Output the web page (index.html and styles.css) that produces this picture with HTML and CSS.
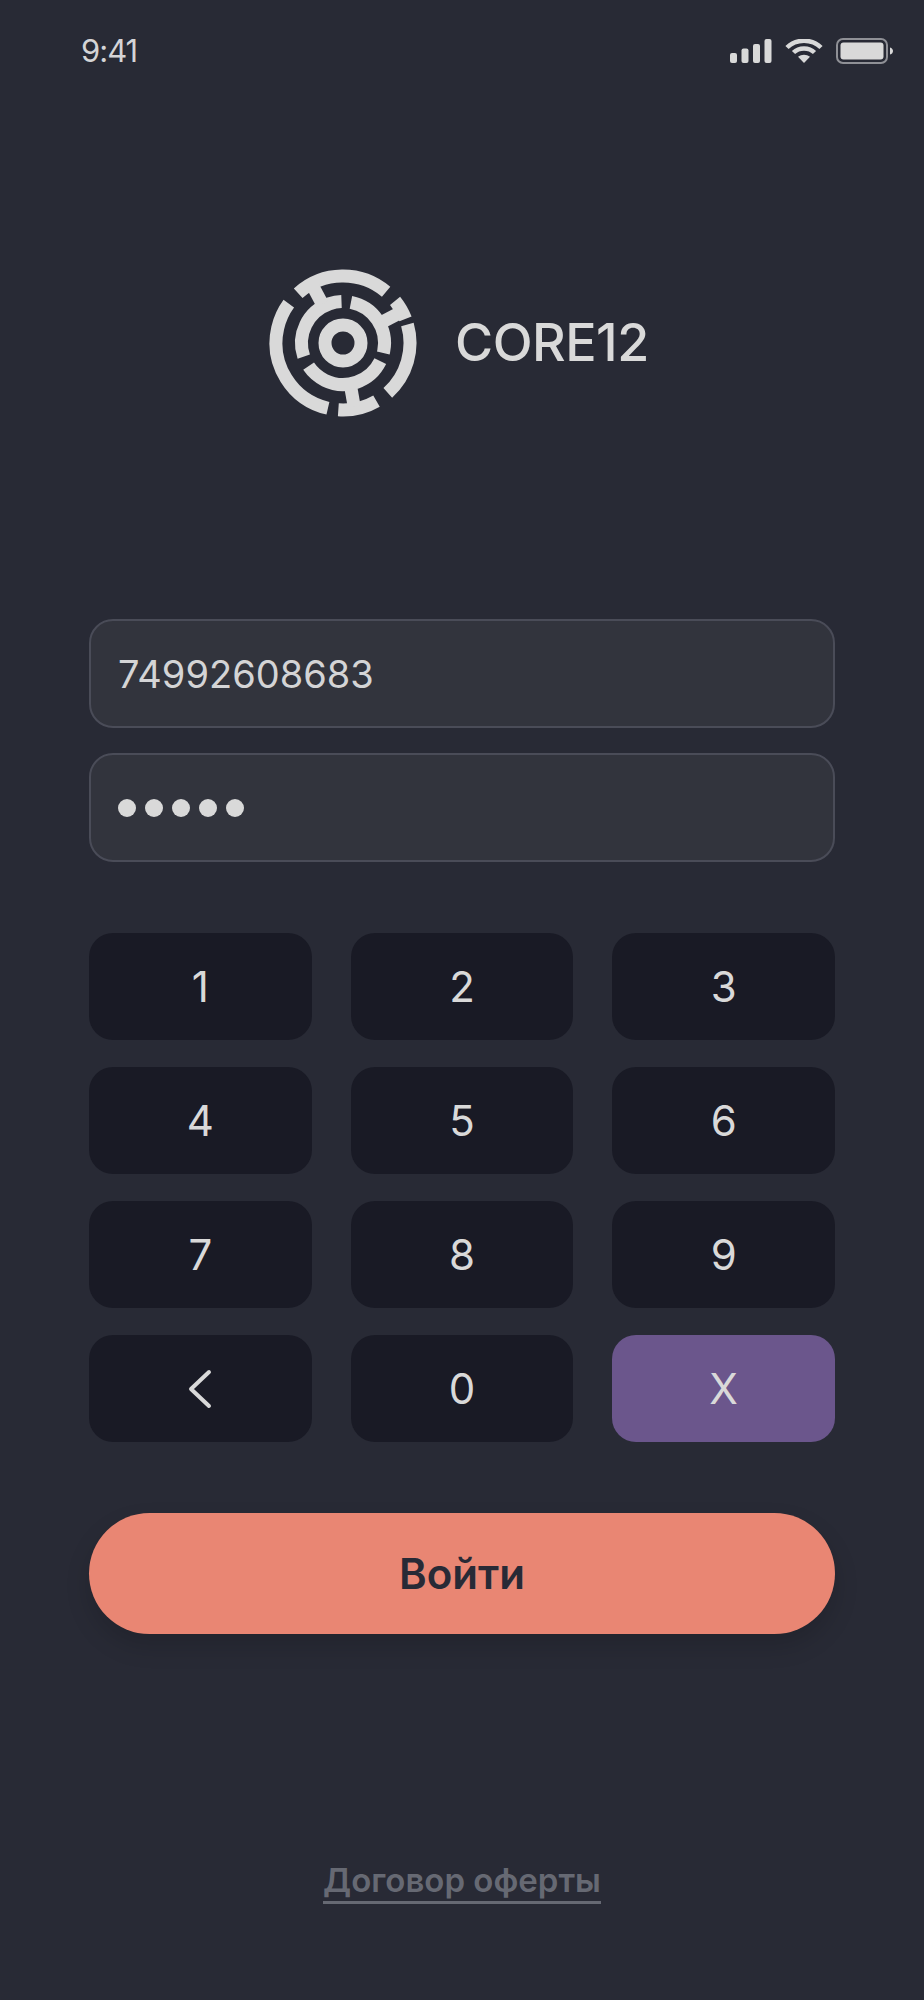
FILE: index.html
```html
<!DOCTYPE html>
<html lang="ru">
<head>
<meta charset="UTF-8">
<meta name="viewport" content="width=device-width, initial-scale=1.0">
<title>CORE12</title>
<link rel="stylesheet" href="styles.css">
</head>
<body>
<div class="page">
    <div class="status">
        <span class="time">9:41</span>
        <div class="status-icons">
            <svg class="signal" width="42" height="24" viewBox="0 0 42 24">
                <rect x="0" y="14" width="7" height="10" rx="2"/>
                <rect x="11.5" y="9.500" width="7" height="14.500" rx="2"/>
                <rect x="23" y="5" width="7" height="19" rx="2"/>
                <rect x="34.500" y="0" width="7" height="24" rx="2"/>
            </svg>
            <svg class="wifi" width="38" height="24" viewBox="0 0 38 24">
                <path d="M2 8.500C11 -0.500 27 -0.500 36 8.500" />
                <path d="M8.500 13.500C14 8 24 8 29.500 13.500" />
                <path class="wifi-dot" d="M19 24L13 17.800C16.500 15 21.500 15 25 17.800Z" />
            </svg>
            <svg class="battery" width="57" height="26" viewBox="0 0 57 26">
                <rect class="battery-line" x="1" y="1" width="50" height="24" rx="6"/>
                <rect x="4.500" y="4.500" width="43" height="17" rx="3"/>
                <path d="M54 9.500C56 10 57 11.500 57 13C57 14.500 56 16 54 16.500Z"/>
            </svg>
        </div>
    </div>

    <div class="logo">
        <svg class="logo-mark" width="150" height="150" viewBox="-75 -75 150 150">
            <g class="rings">
                <circle r="18"/>
                <!-- middle ring -->
                <circle r="41.500" pathLength="360" stroke-dasharray="107 360" transform="rotate(161)"/>
                <circle r="41.500" pathLength="360" stroke-dasharray="93 360" transform="rotate(-79)"/>
                <circle r="41.500" pathLength="360" stroke-dasharray="120 360" transform="rotate(26)"/>
                <!-- outer ring -->
                <circle r="67" pathLength="360" stroke-dasharray="82 360" transform="rotate(-132)"/>
                <circle r="67" pathLength="360" stroke-dasharray="18 360" transform="rotate(-39)"/>
                <circle r="67" pathLength="360" stroke-dasharray="64 360" transform="rotate(-16)"/>
                <circle r="67" pathLength="360" stroke-dasharray="34 360" transform="rotate(60)"/>
                <circle r="67" pathLength="360" stroke-dasharray="113 360" transform="rotate(103)"/>
                <!-- stems -->
                <line x1="44" x2="64" transform="rotate(-118)"/>
                <line x1="44" x2="64" transform="rotate(-28)"/>
                <line x1="44" x2="64" transform="rotate(80)"/>
            </g>
        </svg>
        <span class="logo-name">CORE12</span>
    </div>

    <div class="fields">
        <div class="field">74992608683</div>
        <div class="field field-dots">
            <i></i><i></i><i></i><i></i><i></i>
        </div>
    </div>

    <div class="keypad">
        <div class="key">1</div>
        <div class="key">2</div>
        <div class="key">3</div>
        <div class="key">4</div>
        <div class="key">5</div>
        <div class="key">6</div>
        <div class="key">7</div>
        <div class="key">8</div>
        <div class="key">9</div>
        <div class="key">
            <svg width="24" height="40" viewBox="0 0 24 40">
                <path class="chevron" d="M21 3L3 20L21 37"/>
            </svg>
        </div>
        <div class="key">0</div>
        <div class="key key-clear">X</div>
    </div>

    <div class="login">Войти</div>

    <div class="offer"><span>Договор оферты</span></div>
</div>
</body>
</html>
```

FILE: styles.css
```css
html, body {
    margin: 0;
    padding: 0;
    background: #282a35;
}
.page {
    width: 924px;
    height: 2000px;
    padding: 0 89px;
    box-sizing: border-box;
    font-family: Inter, "Noto Sans", sans-serif;
    color: #d9d9d9;
}

/* status bar */
.status {
    display: flex;
    justify-content: space-between;
    align-items: center;
    height: 26px;
    padding-top: 38px;
    margin: 0 -58px 0 -8px;
}
.time {
    font-size: 31px;
    line-height: 26px;
    letter-spacing: -1px;
    color: #d4d4d6;
}
.status-icons {
    display: flex;
    align-items: center;
    gap: 13px;
}
.status-icons svg {
    display: block;
    fill: #d9d9d9;
}
.wifi path {
    fill: none;
    stroke: #d9d9d9;
    stroke-width: 4.500px;
}
.wifi .wifi-dot {
    fill: #d9d9d9;
    stroke: none;
}
.battery-line {
    fill: none;
    stroke: #8f9096;
    stroke-width: 2px;
}

/* logo */
.logo {
    display: flex;
    align-items: center;
    gap: 37px;
    margin: 204px 0 0 179px;
}
.logo-mark {
    display: block;
    flex: none;
}
.rings circle, .rings line {
    fill: none;
    stroke: #d9d9d9;
    stroke-width: 13px;
}
.logo-name {
    font-size: 52px;
    font-weight: 500;
    letter-spacing: -0.5px;
    line-height: 60px;
}

/* inputs */
.fields {
    display: flex;
    flex-direction: column;
    gap: 25px;
    margin-top: 201px;
}
.field {
    display: flex;
    align-items: center;
    height: 109px;
    padding: 0 27px;
    box-sizing: border-box;
    background: #32343d;
    border: 2px solid #4a4c58;
    border-radius: 24px;
    font-size: 38px;
    color: #d4d4d6;
}
.field-dots {
    gap: 9px;
}
.field-dots i {
    width: 18px;
    height: 18px;
    border-radius: 50%;
    background: #d9d9d9;
}

/* keypad */
.keypad {
    display: grid;
    grid-template-columns: repeat(3, 1fr);
    grid-auto-rows: 107px;
    gap: 27px 39px;
    margin-top: 71px;
}
.key {
    display: flex;
    align-items: center;
    justify-content: center;
    background: #191a25;
    border-radius: 24px;
    font-size: 42px;
    color: #d9d9d9;
}
.key-clear {
    background: #6b568c;
}
.chevron {
    fill: none;
    stroke: #d9d9d9;
    stroke-width: 4px;
    stroke-linecap: round;
    stroke-linejoin: round;
}

/* login button */
.login {
    display: flex;
    align-items: center;
    justify-content: center;
    height: 121px;
    margin-top: 71px;
    background: #e98673;
    border-radius: 61px;
    box-shadow: 0 12px 24px rgba(0, 0, 0, 0.15);
    font-size: 42px;
    font-weight: 600;
    color: #282a36;
}

/* offer link */
.offer {
    display: flex;
    justify-content: center;
    margin-top: 225px;
}
.offer span {
    font-size: 33px;
    font-weight: 600;
    line-height: 42px;
    color: #666973;
    border-bottom: 3px solid #666973;
}
```
